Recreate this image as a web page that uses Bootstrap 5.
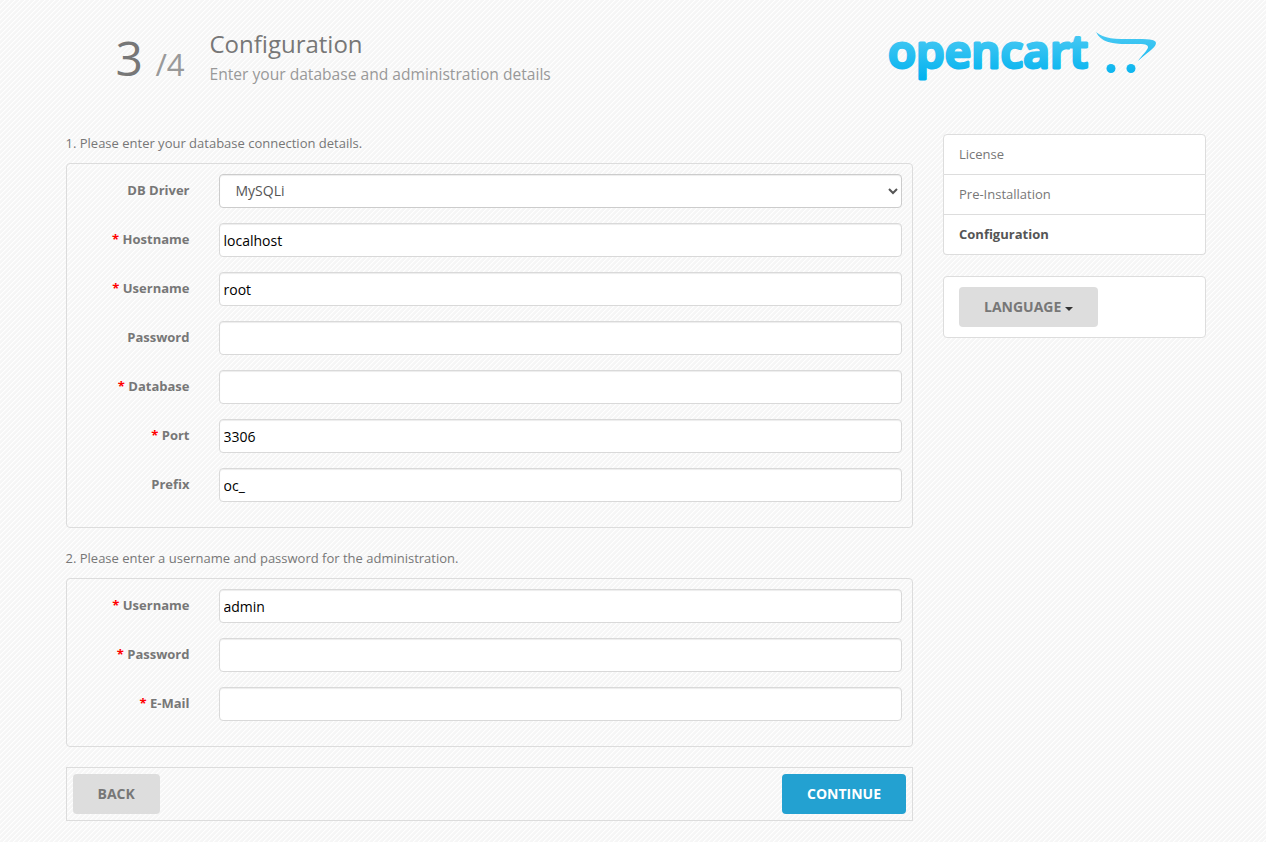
<!DOCTYPE html>
<html lang="en">
<head>
<meta charset="utf-8">
<meta name="viewport" content="width=device-width, initial-scale=1">
<title>Configuration</title>
<link href="https://cdn.jsdelivr.net/npm/bootstrap@5.3.0/dist/css/bootstrap.min.css" rel="stylesheet">
<style>
body {
  font: 13px/20px "Open Sans", sans-serif;
  color: #777;
  padding-left: 5px;
  background: #f6f6f6 url("data:image/svg+xml,%3Csvg xmlns='http://www.w3.org/2000/svg' width='5' height='5' shape-rendering='crispEdges'%3E%3Cpath fill='%23fff' d='M4 0h1v1h-1zM3 1h1v1h-1zM2 2h1v1h-1zM1 3h1v1h-1zM0 4h1v1h-1z'/%3E%3Cpath fill='%23f9f9f9' d='M0 0h1v1h-1zM4 1h1v1h-1zM3 2h1v1h-1zM2 3h1v1h-1zM1 4h1v1h-1z'/%3E%3C/svg%3E");
}
.page { max-width: 1170px; --bs-gutter-x: 30px; }
.page .row { --bs-gutter-x: 30px; }
.page-head { padding: 30px 48px 0 50px; height: 133px; }
.step { width: 94px; font-size: 48px; line-height: 56px; }
.step small { font-size: 65%; color: #999; }
h1 { font-size: 24px; line-height: 28px; font-weight: 400; margin: 0; }
h1 small { display: block; font-size: 65%; line-height: 20px; color: #999; margin-top: 6px; }
.brand { width: 272px; height: 56px; overflow: visible; }
.intro { margin: 0 0 10px; }
fieldset { border: 1px solid #dcdcdc; border-radius: 4px; padding: 10px 10px 25px; margin-bottom: 20px; }
.field { display: grid; grid-template-columns: 113px 1fr; column-gap: 29px; margin-bottom: 15px; }
.field:last-child { margin-bottom: 0; }
.field label { text-align: right; font-weight: 700; line-height: 18px; padding-top: 7px; }
.req::before { content: "* "; color: #f00; }
.field input, .field select {
  height: 34px; font-size: 14px; line-height: 20px; border: 1px solid #d9d9d9; border-radius: 4px;
  padding: 0 4px; color: #000; background: #fff; width: 100%; box-shadow: inset 0 1px 1px rgba(0,0,0,.075);
}
.field select { border-color: #ccc; color: #555; padding: 0 1px 2px 12px; }
.actions { border: 1px solid #dcdcdc; padding: 6px; }
.btn-step {
  height: 40px; padding: 0 25px; font-size: 14px; font-weight: 700; line-height: 40px;
  border: 0; border-radius: 4px; background: #ddd; color: #777;
}
.btn-next { background: #23a1d1; color: #fff; }
.btn-step.dropdown-toggle::after { color: #333; margin-left: 4px; border-width: 4px 4px 0; vertical-align: 1px; }
aside { padding-top: 1px; }
.steps { --bs-list-group-border-color: #ddd; --bs-list-group-border-radius: 4px; margin-bottom: 21px; }
.steps .list-group-item { padding: 10px 15px; line-height: 19px; color: #777; }
.steps .current { font-weight: 700; color: #555; }
.lang-box { border: 1px solid #ddd; border-radius: 4px; background: #fff; padding: 10px 15px; }
</style>
</head>
<body>
<div class="container-fluid page">
  <header class="page-head d-flex justify-content-between">
    <div class="d-flex">
      <div class="step">3 <small>/4</small></div>
      <h1>Configuration <small>Enter your database and administration details</small></h1>
    </div>
    <svg class="brand" viewBox="0 0 272 56" role="img" aria-label="opencart">
      <defs>
        <linearGradient id="sky" gradientUnits="userSpaceOnUse" x1="0" y1="0" x2="0" y2="50">
          <stop offset="0" stop-color="#4fcbf3"/><stop offset="1" stop-color="#00b2ef"/>
        </linearGradient>
      </defs>
      <g fill="url(#sky)">
        <text x="2" y="38" font-family="Open Sans, sans-serif" font-weight="600" font-size="46" stroke="url(#sky)" stroke-width="3" stroke-linejoin="round">opencart</text>
        <path d="M210 2C218 9 229 9 247 9C261 9 270 9 270 13C270 18 259 24 252 31C256 25 262 20 262 17C262 13 253 14 241 14C225 14 215 12 210 2Z"/>
        <circle cx="225" cy="38.500" r="4.500"/><circle cx="245" cy="38.500" r="4.500"/>
      </g>
    </svg>
  </header>
  <div class="row">
    <main class="col-9">
      <form>
        <p class="intro">1. Please enter your database connection details.</p>
        <fieldset>
          <div class="field"><label for="driver">DB Driver</label><select id="driver"><option>MySQLi</option></select></div>
          <div class="field"><label class="req" for="host">Hostname</label><input id="host" type="text" value="localhost"></div>
          <div class="field"><label class="req" for="dbuser">Username</label><input id="dbuser" type="text" value="root"></div>
          <div class="field"><label for="dbpass">Password</label><input id="dbpass" type="password"></div>
          <div class="field"><label class="req" for="dbname">Database</label><input id="dbname" type="text"></div>
          <div class="field"><label class="req" for="port">Port</label><input id="port" type="text" value="3306"></div>
          <div class="field"><label for="prefix">Prefix</label><input id="prefix" type="text" value="oc_"></div>
        </fieldset>
        <p class="intro">2. Please enter a username and password for the administration.</p>
        <fieldset>
          <div class="field"><label class="req" for="user">Username</label><input id="user" type="text" value="admin"></div>
          <div class="field"><label class="req" for="pass">Password</label><input id="pass" type="password"></div>
          <div class="field"><label class="req" for="email">E-Mail</label><input id="email" type="email"></div>
        </fieldset>
        <div class="actions d-flex justify-content-between">
          <button type="button" class="btn btn-step">BACK</button>
          <button type="submit" class="btn btn-step btn-next">CONTINUE</button>
        </div>
      </form>
    </main>
    <aside class="col-3">
      <ul class="list-group steps">
        <li class="list-group-item">License</li>
        <li class="list-group-item">Pre-Installation</li>
        <li class="list-group-item current">Configuration</li>
      </ul>
      <div class="lang-box dropdown">
        <button type="button" class="btn btn-step dropdown-toggle" data-bs-toggle="dropdown" aria-expanded="false">LANGUAGE</button>
      </div>
    </aside>
  </div>
</div>
<script src="https://cdn.jsdelivr.net/npm/bootstrap@5.3.0/dist/js/bootstrap.bundle.min.js"></script>
</body>
</html>
